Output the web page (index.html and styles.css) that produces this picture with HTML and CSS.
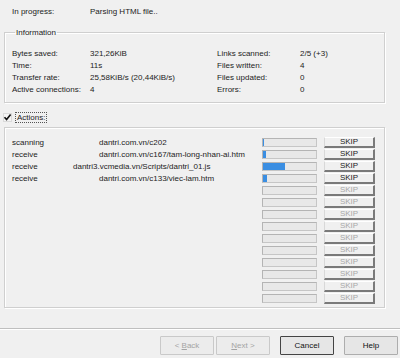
FILE: index.html
```html
<!DOCTYPE html>
<html lang="en">
<head>
  <meta charset="UTF-8" />
  <title>Download progress</title>
  <link rel="stylesheet" href="styles.css">
</head>
<body>

  <div class="dialog">
    <div class="status">
      <span>In progress:</span>
      <span>Parsing HTML file..</span>
    </div>

    <fieldset class="group info">
      <legend>Information</legend>
      <div class="info-grid">
        <span>Bytes saved:</span><span>321,26KiB</span>
        <span>Links scanned:</span><span>2/5 (+3)</span>
        <span>Time:</span><span>11s</span>
        <span>Files written:</span><span>4</span>
        <span>Transfer rate:</span><span>25,58KiB/s (20,44KiB/s)</span>
        <span>Files updated:</span><span>0</span>
        <span>Active connections:</span><span>4</span>
        <span>Errors:</span><span>0</span>
      </div>
    </fieldset>

    <div class="toggle">
      <svg class="check" width="9" height="9" viewBox="0 0 9 9">
        <rect x="0.5" y="0.5" width="8" height="8" fill="#f4f4f4" stroke="#dadada"/>
        <path d="M1.5 4.2 L3.6 6.6 L7.6 1.6" fill="none" stroke="#111" stroke-width="1.6"/>
      </svg>
      <span class="focus">Actions:</span>
    </div>

    <div class="group actions" id="actions"></div>

    <div class="footer">
      <button class="btn" disabled>&lt; <u>B</u>ack</button>
      <button class="btn" disabled><u>N</u>ext &gt;</button>
      <button class="btn default">Cancel</button>
      <button class="btn">Help</button>
    </div>
  </div>

  <script>
    const jobs = [
      { action: "scanning", url: "dantri.com.vn/c202", done: 2 },
      { action: "receive", url: "dantri.com.vn/c167/tam-long-nhan-ai.htm", done: 5 },
      { action: "receive", url: "dantri3.vcmedia.vn/Scripts/dantri_01.js", done: 42, wide: true },
      { action: "receive", url: "dantri.com.vn/c133/viec-lam.htm", done: 8 }
    ];

    const list = document.getElementById("actions");
    for (let i = 0; i < 14; i++) {
      const job = jobs[i];
      const row = document.createElement("div");
      row.className = "row";
      if (job) {
        row.innerHTML = `
          <span class="act">${job.action}</span>
          <span class="url${job.wide ? " wide" : ""}">${job.url}</span>
          <span class="bar"><span class="fill" style="width: ${job.done}%"></span></span>
          <button class="skip">SKIP</button>`;
      } else {
        row.innerHTML = `
          <span class="act"></span>
          <span class="url"></span>
          <span class="bar"></span>
          <button class="skip" disabled>SKIP</button>`;
      }
      list.appendChild(row);
    }
  </script>

</body>
</html>
```

FILE: styles.css
```css
body {
  margin: 0;
  background: #f0f0f0;
  font-family: 'Liberation Sans', Arial, sans-serif;
  font-size: 8px;
  color: #1c1c1c;
}

.dialog {
  width: 400px;
  height: 358px;
  display: flex;
  flex-direction: column;
}

.status {
  display: grid;
  grid-template-columns: 78px auto;
  padding: 6px 0 0 12px;
  line-height: 12px;
}

.group {
  margin: 0 15px 0 4px;
  border: 1px solid #cfcfcf;
  box-shadow: inset 1px 1px 0 #fff, 1px 1px 0 #fff;
}

.info {
  margin-top: 9px;
  padding: 10px 0 6px 7px;
}

.info legend {
  padding: 0 1px;
  margin-left: 3px;
  line-height: 11px;
  color: #222;
}

.info-grid {
  display: grid;
  grid-template-columns: 78px 127px 83px auto;
  line-height: 12px;
}

.toggle {
  display: flex;
  align-items: center;
  gap: 3px;
  margin: 8px 0 0 3px;
  height: 12px;
}

.check {
  flex: none;
}

.focus {
  border: 1px dotted #555;
  padding: 0 1px;
  line-height: 9px;
}

.actions {
  margin-top: 4px;
  padding: 8px 0 3px 7px;
}

.row {
  display: flex;
  align-items: center;
  height: 12px;
  white-space: nowrap;
}

.act {
  width: 87px;
  flex: none;
}

.url {
  width: 163px;
  flex: none;
}

.url.wide {
  margin-left: -26px;
  width: 189px;
}

.bar {
  flex: none;
  width: 53px;
  height: 7px;
  background: #e8e8e8;
  border: 1px solid #c6c6c6;
  border-top-color: #b4b4b4;
  border-left-color: #b4b4b4;
}

.fill {
  display: block;
  height: 100%;
  background: #3a8ee2;
}

.skip {
  flex: none;
  width: 51px;
  height: 11px;
  margin-left: 7px;
  padding: 0;
  font-family: inherit;
  font-size: 8px;
  line-height: 8px;
  color: #1c1c1c;
  background: #f0f0f0;
  border: 1px solid #fff;
  border-left-color: #d8d8d8;
  border-right: 2px solid #7a7a7a;
  border-bottom: 2px solid #7a7a7a;
}

.skip:disabled {
  color: #a8a8a8;
}

.footer {
  margin-top: 20px;
  border-top: 1px solid #bfbfbf;
  box-shadow: inset 0 1px 0 #fff;
  display: flex;
  justify-content: flex-end;
  gap: 2px;
  padding: 7px 2px 0 0;
}

.btn {
  width: 54px;
  height: 19px;
  padding: 0;
  font-family: inherit;
  font-size: 8px;
  color: #111;
  background: #e6e6e6;
  border: 1px solid #adadad;
  border-radius: 1px;
}

.btn:disabled {
  color: #a4a4a4;
  border-color: #c9c9c9;
  background: #ececec;
}

.btn.default {
  margin-left: 8px;
  margin-right: 8px;
  border-color: #444;
}
```
